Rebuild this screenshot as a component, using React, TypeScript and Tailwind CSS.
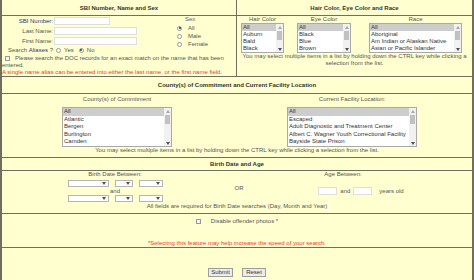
import type { ReactNode } from "react";

function Arrow({ up, dark }: { up?: boolean; dark?: boolean }) {
  return (
    <svg width="4" height="3" viewBox="0 0 4 3" className={dark ? "fill-[#505050]" : "fill-[#a8a8a8]"}>
      {up ? <path d="M0 3 L2 0 L4 3 Z" /> : <path d="M0 0 L4 0 L2 3 Z" />}
    </svg>
  );
}

function ListBox({ items, className, rowClass }: { items: string[]; className: string; rowClass: string }) {
  return (
    <div className={`flex border border-[#a9a9a9] bg-white ${className}`}>
      <div className="flex-1 min-w-0 overflow-hidden">
        {items.map((item, i) => (
          <div
            key={i}
            className={`${rowClass} px-[1px] whitespace-nowrap overflow-hidden text-[#333] ${i === 0 ? "bg-[#cdcdcd]" : ""}`}
          >
            {item}
          </div>
        ))}
      </div>
      <div className="w-[7px] bg-[#f1f1f1] flex flex-col items-center">
        <div className="h-[6px] flex items-center justify-center">
          <Arrow up />
        </div>
        <div className="w-[5px] h-[9px] bg-[#c1c1c1] mt-[1px]"></div>
        <div className="flex-1"></div>
        <div className="h-[6px] flex items-center justify-center">
          <Arrow dark />
        </div>
      </div>
    </div>
  );
}

function Dropdown({ className }: { className: string }) {
  return (
    <div className={`h-[7px] bg-white border border-[#b5b5b5] flex items-center justify-end pr-[2px] ${className}`}>
      <Arrow dark />
    </div>
  );
}

function Radio({ checked }: { checked?: boolean }) {
  return (
    <span className="w-[5px] h-[5px] rounded-full border border-[#9a9a9a] bg-white flex items-center justify-center shrink-0">
      {checked && <span className="w-[2px] h-[2px] rounded-full bg-[#333]"></span>}
    </span>
  );
}

function Box() {
  return <span className="inline-block w-[5px] h-[5px] border border-[#9a9a9a] bg-[#f4f4f4] align-middle"></span>;
}

function TextInput({ className }: { className: string }) {
  return <div className={`h-[8px] bg-white border border-[#dedede] ${className}`}></div>;
}

function Header({ children, className }: { children: ReactNode; className: string }) {
  return (
    <div className={`flex items-center justify-center font-bold text-[#333] border-b border-[#6f6f5c] ${className}`}>
      {children}
    </div>
  );
}

export default function App() {
  return (
    <div className="w-[474px] h-[280px] overflow-hidden bg-[#ffffcf] border-x-2 border-[#6f6f5c] text-[6px] leading-[7px] text-[#555] font-['Liberation_Sans',Arial,sans-serif]">
      {/* name / sex + hair / eye / race */}
      <div className="grid grid-cols-[235px_1fr] border-b border-[#6f6f5c] h-[77px]">
        <div className="border-r border-[#6f6f5c]">
          <Header className="h-[16px] pt-[2px]">SBI Number, Name and Sex</Header>
          <div className="flex">
            <div className="w-[175px]">
              <div className="grid grid-cols-[51px_1fr] gap-x-[1px]">
                <div className="h-[10px] flex items-center justify-end text-[#34347c]">SBI Number:</div>
                <div className="h-[10px] flex items-center"><TextInput className="w-[56px]" /></div>
                <div className="h-[10px] flex items-center justify-end">Last Name:</div>
                <div className="h-[10px] flex items-center"><TextInput className="w-[83px]" /></div>
                <div className="h-[10px] flex items-center justify-end">First Name:</div>
                <div className="h-[10px] flex items-center"><TextInput className="w-[83px]" /></div>
                <div className="h-[8px] flex items-center justify-end whitespace-nowrap">
                  Search&nbsp;<span className="text-[#34347c]">Aliases</span>&nbsp;?
                </div>
                <div className="h-[8px] flex items-center">
                  <span className="ml-[2px]"><Radio /></span>
                  <span className="ml-[3px]">Yes</span>
                  <span className="ml-[5px]"><Radio checked /></span>
                  <span className="ml-[3px]">No</span>
                </div>
              </div>
            </div>
            <div className="flex flex-col">
              <div className="h-[7px] pl-[8px] text-[#5a5a8a]">Sex</div>
              <div className="mt-[1px] flex flex-col">
                {[
                  ["All", true],
                  ["Male", false],
                  ["Female", false],
                ].map(([label, checked]) => (
                  <div key={label as string} className="h-[8px] flex items-center gap-[6px]">
                    <Radio checked={checked as boolean} />
                    <span>{label as string}</span>
                  </div>
                ))}
              </div>
            </div>
          </div>
          <p className="mt-[1px]">
            <span className="ml-[3px] mr-[5px]"><Box /></span>
            Please search the DOC records for an exact match on the name that has been entered.
          </p>
          <p className="text-[#f03a2e] text-[6px] whitespace-nowrap">
            A single name alias can be entered into either the last name, or the first name field.
          </p>
        </div>
        <div>
          <Header className="h-[16px] pt-[2px]">Hair Color, Eye Color and Race</Header>
          <div className="flex pl-[4px]">
            <div className="flex flex-col items-center w-[43px]">
              <div className="h-[7px]">Hair Color</div>
              <ListBox items={["All", "Auburn", "Bald", "Black"]} className="w-[43px] h-[30px]" rowClass="h-[7px] leading-[7px]" />
            </div>
            <div className="flex flex-col items-center w-[54px] ml-[13px]">
              <div className="h-[7px]">Eye Color</div>
              <ListBox items={["All", "Black", "Blue", "Brown"]} className="w-[54px] h-[30px]" rowClass="h-[7px] leading-[7px]" />
            </div>
            <div className="flex flex-col items-center w-[93px] ml-[18px]">
              <div className="h-[7px]">Race</div>
              <ListBox
                items={["All", "Aboriginal", "Am Indian or Alaskan Native", "Asian or Pacific Islander"]}
                className="w-[93px] h-[30px]"
                rowClass="h-[7px] leading-[7px]"
              />
            </div>
          </div>
          <p className="text-center px-[2px]">
            You may select multiple items in a list by holding down the CTRL key while clicking a selection from the list.
          </p>
        </div>
      </div>

      {/* county / facility */}
      <Header className="h-[17px]">County(s) of Commitment and Current Facility Location</Header>
      <div className="h-[64px] border-b border-[#6f6f5c] pt-[2px]">
        <div className="grid grid-cols-[230px_1fr]">
          <div className="flex flex-col items-center">
            <div className="h-[7px]">County(s) of Commitment</div>
            <ListBox
              items={["All", "Atlantic", "Bergen", "Burlington", "Camden"]}
              className="w-[110px] h-[40px] mt-[4px]"
              rowClass="h-[7.6px] leading-[7.6px]"
            />
          </div>
          <div className="flex flex-col items-center">
            <div className="h-[7px]">Current Facility Location:</div>
            <ListBox
              items={[
                "All",
                "Escaped",
                "Adult Diagnostic and Treatment Center",
                "Albert C. Wagner Youth Correctional Facility",
                "Bayside State Prison",
              ]}
              className="w-[130px] h-[40px] mt-[4px]"
              rowClass="h-[7.6px] leading-[7.6px]"
            />
          </div>
        </div>
        <p className="text-center">
          You may select multiple items in a list by holding down the CTRL key while clicking a selection from the list.
        </p>
      </div>

      {/* birth date / age */}
      <Header className="h-[13px]">Birth Date and Age</Header>
      <div className="h-[43px] border-b border-[#6f6f5c]">
        <div className="grid grid-cols-[226px_22px_1fr]">
          <div className="flex flex-col items-center">
            <div className="h-[7px]">Birth Date Between:</div>
            <div className="flex gap-[6px] mt-[2px]">
              <Dropdown className="w-[41px]" />
              <Dropdown className="w-[18px]" />
              <Dropdown className="w-[24px]" />
            </div>
            <div className="h-[8px] leading-[8px]">and</div>
            <div className="flex gap-[6px]">
              <Dropdown className="w-[41px]" />
              <Dropdown className="w-[18px]" />
              <Dropdown className="w-[24px]" />
            </div>
          </div>
          <div className="flex items-center justify-center pt-[3px]">OR</div>
          <div className="flex flex-col items-center">
            <div className="h-[7px] mr-[36px]">Age Between:</div>
            <div className="flex items-center mt-[9px]">
              <TextInput className="w-[19px]" />
              <span className="mx-[3px]">and</span>
              <TextInput className="w-[19px]" />
              <span className="ml-[7px]">years old</span>
            </div>
          </div>
        </div>
        <p className="text-center mt-[1px]">All fields are required for Birth Date searches (Day, Month and Year)</p>
      </div>

      {/* photos */}
      <div className="h-[34px] border-b border-[#6f6f5c] flex flex-col items-center justify-between pt-[4px]">
        <div className="flex items-center">
          <Box />
          <span className="ml-[10px]">Disable offender photos *</span>
        </div>
        <p className="text-[#f03a2e]">*Selecting this feature may help increase the speed of your search.</p>
      </div>

      {/* buttons */}
      <div className="flex justify-center gap-[9px] pt-[20px]">
        <button className="h-[9px] w-[25px] bg-[#ececec] border border-[#9c9c9c] text-[6px] leading-[7px] text-[#333]">Submit</button>
        <button className="h-[9px] w-[24px] bg-[#ececec] border border-[#9c9c9c] text-[6px] leading-[7px] text-[#333]">Reset</button>
      </div>
    </div>
  );
}
